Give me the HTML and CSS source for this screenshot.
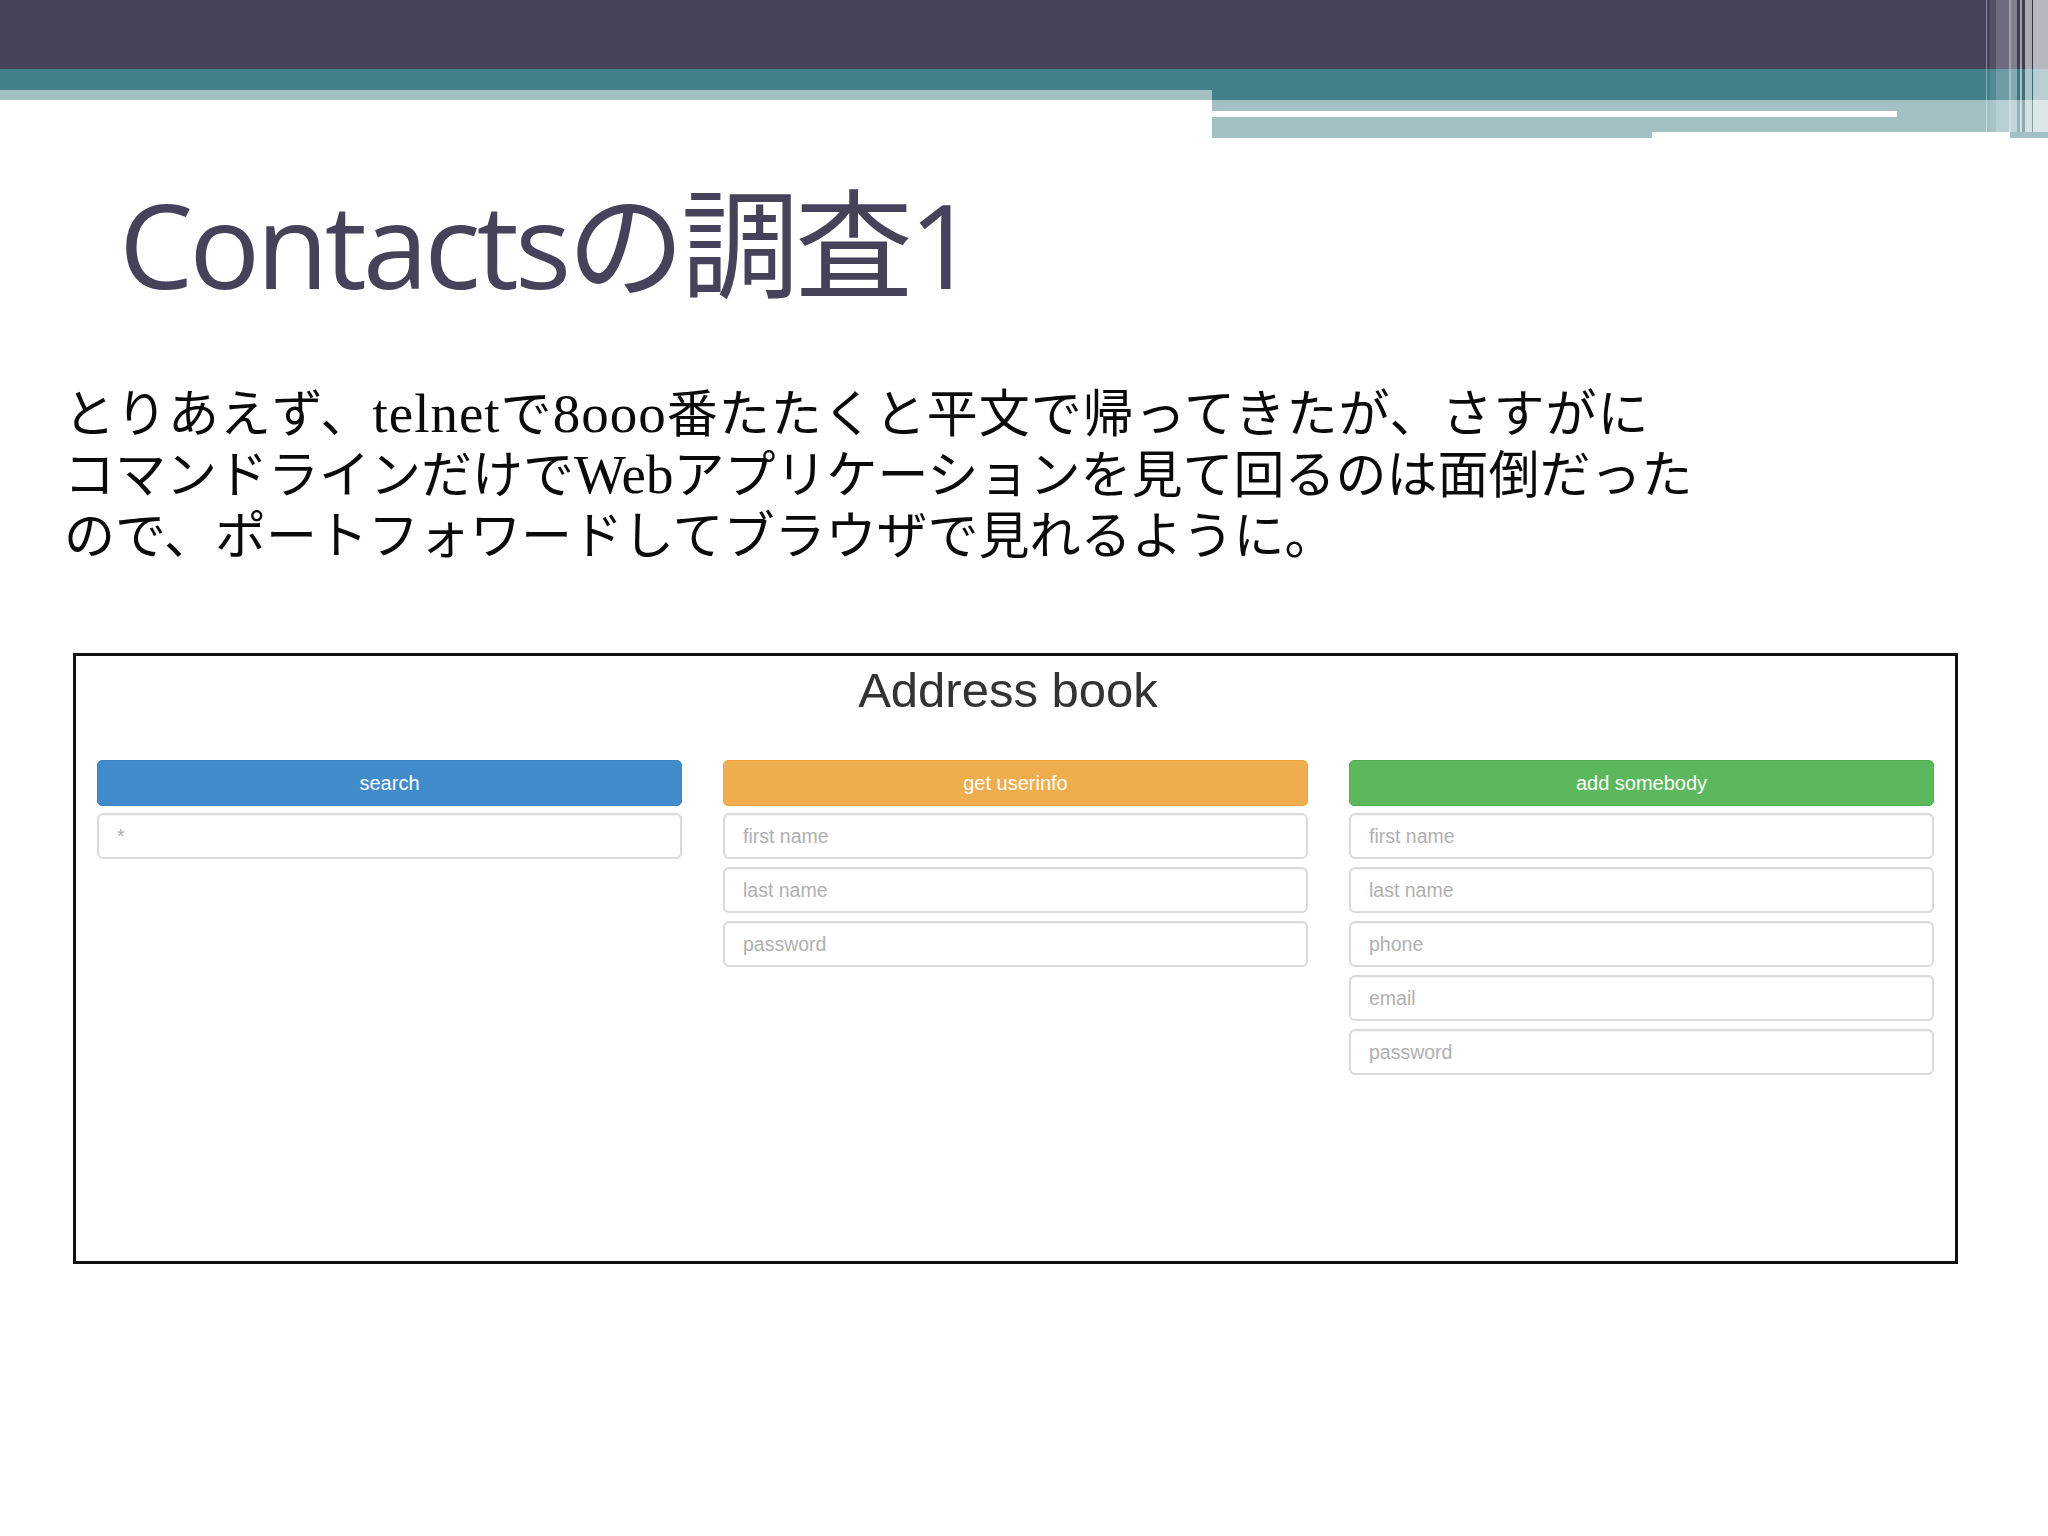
FILE: index.html
```html
<!DOCTYPE html>
<html lang="ja">
<head>
<meta charset="utf-8">
<title>Contactsの調査1</title>
<link rel="stylesheet" href="styles.css">
</head>
<body>
<div class="slide">
  <header class="deco">
    <div class="bar-dark"></div>
    <div class="bar-mid">
      <div class="mid-left">
        <div class="teal-a"></div>
        <div class="light-a"></div>
      </div>
      <div class="mid-right"></div>
    </div>
    <div class="bar-low">
      <div class="low-spacer"></div>
      <div class="low-right">
        <div class="lr-light lr-1"></div>
        <div class="lr-line"><div class="lr-white"></div></div>
        <div class="lr-light lr-2"></div>
        <div class="lr-foot">
          <div class="foot-light"></div>
          <div class="foot-white"></div>
          <div class="foot-rest"></div>
        </div>
      </div>
    </div>
    <div class="stripes"></div>
  </header>

  <h1 class="title">Contactsの調査1</h1>

  <p class="body-text"><span class="line1">とりあえず、<span class="latin">telnet</span>で<span class="latin">8ooo</span>番たたくと平文で帰ってきたが、さすがに</span><br>コマンドラインだけで<span class="latin">Web</span>アプリケーションを見て回るのは面倒だった<br>ので、ポートフォワードしてブラウザで見れるように。</p>

  <section class="panel">
    <h2 class="panel-title">Address book</h2>
    <div class="cols">
      <div class="col">
        <button class="btn btn-blue">search</button>
        <input class="field" type="text" placeholder="*">
      </div>
      <div class="col">
        <button class="btn btn-orange">get userinfo</button>
        <input class="field" type="text" placeholder="first name">
        <input class="field" type="text" placeholder="last name">
        <input class="field" type="text" placeholder="password">
      </div>
      <div class="col">
        <button class="btn btn-green">add somebody</button>
        <input class="field" type="text" placeholder="first name">
        <input class="field" type="text" placeholder="last name">
        <input class="field" type="text" placeholder="phone">
        <input class="field" type="text" placeholder="email">
        <input class="field" type="text" placeholder="password">
      </div>
    </div>
  </section>
</div>
</body>
</html>
```

FILE: styles.css
```css
html, body {
  margin: 0;
  padding: 0;
  background: #ffffff;
}

.slide {
  width: 2048px;
  height: 1536px;
  overflow: hidden;
  position: relative;
  background: #ffffff;
}

/* ---------- decorative header ---------- */
.deco {
  position: relative;
  height: 138px;
}
.bar-dark {
  height: 69px;
  background: #45435a;
}
.bar-mid {
  display: flex;
  height: 31px;
}
.mid-left {
  width: 1212px;
  display: flex;
  flex-direction: column;
}
.teal-a {
  height: 21px;
  background: #44808a;
}
.light-a {
  height: 10px;
  background: #a3c0c5;
}
.mid-right {
  flex: 1;
  background: #44808a;
}
.bar-low {
  display: flex;
  height: 38px;
}
.low-spacer {
  width: 1212px;
}
.low-right {
  flex: 1;
  display: flex;
  flex-direction: column;
}
.lr-light {
  background: #a3c0c5;
}
.lr-1 { height: 11px; }
.lr-2 { height: 15px; }
.lr-line {
  height: 6px;
  background: #a3c0c5;
}
.lr-white {
  width: 685px;
  height: 6px;
  background: #ffffff;
}
.lr-foot {
  display: flex;
  height: 6px;
}
.foot-light {
  width: 440px;
  background: #a3c0c5;
}
.foot-white {
  width: 358px;
  background: #ffffff;
}
.foot-rest {
  flex: 1;
  background: #a3c0c5;
}
.stripes {
  position: absolute;
  top: 0;
  right: 0;
  width: 62px;
  height: 132px;
  background: linear-gradient(to right,
    rgba(255,255,255,0.35) 0px, rgba(255,255,255,0.35) 1px,
    rgba(255,255,255,0) 1px, rgba(255,255,255,0) 4px,
    rgba(255,255,255,0.08) 4px, rgba(255,255,255,0.08) 10px,
    rgba(255,255,255,0.22) 10px, rgba(255,255,255,0.22) 23px,
    rgba(255,255,255,0.5) 23px, rgba(255,255,255,0.5) 25px,
    rgba(255,255,255,0.33) 25px, rgba(255,255,255,0.33) 31px,
    rgba(0,0,0,0.08) 31px, rgba(0,0,0,0.08) 34px,
    rgba(255,255,255,0.5) 34px, rgba(255,255,255,0.5) 36px,
    rgba(0,0,0,0.12) 36px, rgba(0,0,0,0.12) 39px,
    rgba(255,255,255,0.55) 39px, rgba(255,255,255,0.55) 46px,
    rgba(0,0,0,0.2) 46px, rgba(0,0,0,0.2) 47px,
    rgba(255,255,255,0.62) 47px, rgba(255,255,255,0.62) 62px);
}

/* ---------- title ---------- */
.title {
  margin: 36px 0 0 119px;
  font-family: "Open Sans", "Noto Sans CJK JP", sans-serif;
  font-weight: 400;
  font-size: 118px;
  line-height: 140px;
  letter-spacing: -4px;
  color: #45435a;
  white-space: nowrap;
}

/* ---------- body text ---------- */
.body-text {
  margin: 71px 0 0 64px;
  height: 183px;
  font-family: "Liberation Serif", "Noto Sans CJK JP", serif;
  font-size: 51px;
  line-height: 61px;
  color: #0a0a0a;
  white-space: nowrap;
}
.line1 {
  letter-spacing: 1px;
}
.latin {
  font-size: 55px;
  line-height: 1;
}

/* ---------- address book panel ---------- */
.panel {
  box-sizing: border-box;
  margin: 85px 0 0 73px;
  width: 1885px;
  height: 611px;
  border: 3px solid #111111;
  padding: 6px 21px 0 21px;
  font-family: "Liberation Sans", Arial, sans-serif;
}
.panel-title {
  margin: 0;
  padding-right: 15px;
  text-align: center;
  font-family: "Liberation Sans", Arial, sans-serif;
  font-weight: 400;
  font-size: 49px;
  line-height: 56px;
  color: #333333;
}
.cols {
  margin-top: 42px;
  display: grid;
  grid-template-columns: repeat(3, 1fr);
  column-gap: 41px;
  align-items: start;
}
.col {
  display: flex;
  flex-direction: column;
  gap: 8px;
}
.btn {
  height: 46px;
  margin-bottom: -1px;
  border: 1px solid transparent;
  border-radius: 5px;
  font-family: "Liberation Sans", Arial, sans-serif;
  font-size: 20px;
  color: #ffffff;
  padding: 0;
  cursor: pointer;
}
.btn-blue {
  background: #428bca;
  border-color: #3d84c2;
}
.btn-orange {
  background: #f0ad4e;
  border-color: #eea43f;
}
.btn-green {
  background: #5cb85c;
  border-color: #52ae52;
}
.field {
  box-sizing: border-box;
  height: 46px;
  width: 100%;
  margin: 0;
  padding: 0 18px;
  border: 2px solid #dadada;
  border-radius: 6px;
  background: #ffffff;
  font-family: "Liberation Sans", Arial, sans-serif;
  font-size: 19.5px;
  color: #555555;
  box-shadow: inset 0 1px 1px rgba(0,0,0,0.05);
}
.field::placeholder {
  color: #b0b0b0;
}
```
